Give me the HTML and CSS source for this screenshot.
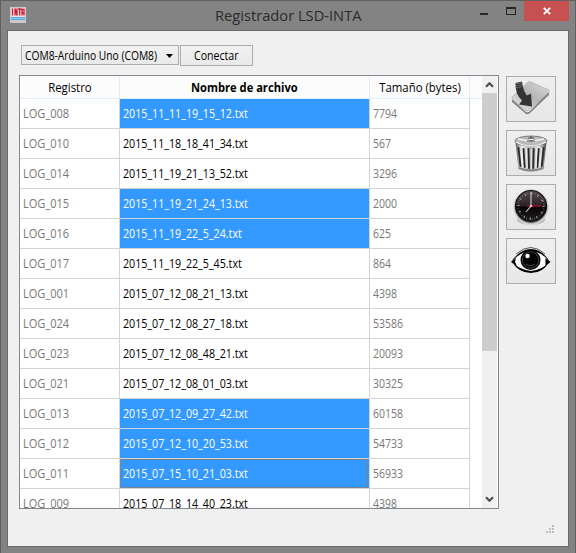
FILE: index.html
```html
<!DOCTYPE html>
<html lang="es">
<head>
<meta charset="utf-8">
<title>Registrador LSD-INTA</title>
<link rel="stylesheet" href="styles.css">
</head>
<body>
<div class="window">
  <header class="titlebar">
    <svg class="app-icon" width="16" height="16" viewBox="0 0 16 16"><rect width="16" height="16" fill="#c9c9c9"/><rect x="1" y="1" width="14" height="9" fill="#f3dfe2"/><path d="M2.500 1.500v7M5 8.500v-7l2 7v-7M8 2h3.500M9.700 2v6.500M12 8.500v-6h2v6M12 6h2" fill="none" stroke="#d21c32" stroke-width="1.300"/><path d="M1 10h14v3H1z" fill="#58a9e4"/><path d="M1 11.500h14" stroke="#a5d6f5" stroke-width=".7"/></svg>
    <h1><span>Registrador LSD-INTA</span></h1>
    <div class="controls">
      <svg width="48" height="20" viewBox="0 0 48 20"><path d="M4 12h8v2H4z" fill="#262626"/><path d="M30 6h10v2H30zM30 7h1v7h-1zM39 7h1v7h-1zM30 13h10v1H30z" fill="#262626"/></svg>
      <div class="close"><svg width="8" height="8" viewBox="0 0 8 8"><path d="M.8.8l6.400 6.400M7.200.8L.8 7.200" stroke="#fff" stroke-width="1.900"/></svg></div>
    </div>
  </header>
  <main class="client">
    <div class="toolbar">
      <div class="combo"><span class="t">COM8-Arduino Uno (COM8)</span><svg width="7" height="4" viewBox="0 0 7 4"><path d="M0 0h7L3.500 4z"/></svg></div>
      <div class="connect"><span class="t">Conectar</span></div>
    </div>
    <div class="content">
      <div class="table">
        <div class="grid">
          <div class="row head"><div><span class="t">Registro</span></div><div><b class="t">Nombre de archivo</b></div><div><span class="t">Tamaño (bytes)</span></div></div>
          <div class="row"><div><span>LOG_008</span></div><div class="sel"><span>2015_11_11_19_15_12.txt</span></div><div><span>7794</span></div></div>
          <div class="row"><div><span>LOG_010</span></div><div><span>2015_11_18_18_41_34.txt</span></div><div><span>567</span></div></div>
          <div class="row"><div><span>LOG_014</span></div><div><span>2015_11_19_21_13_52.txt</span></div><div><span>3296</span></div></div>
          <div class="row"><div><span>LOG_015</span></div><div class="sel"><span>2015_11_19_21_24_13.txt</span></div><div><span>2000</span></div></div>
          <div class="row"><div><span>LOG_016</span></div><div class="sel"><span>2015_11_19_22_5_24.txt</span></div><div><span>625</span></div></div>
          <div class="row"><div><span>LOG_017</span></div><div><span>2015_11_19_22_5_45.txt</span></div><div><span>864</span></div></div>
          <div class="row"><div><span>LOG_001</span></div><div><span>2015_07_12_08_21_13.txt</span></div><div><span>4398</span></div></div>
          <div class="row"><div><span>LOG_024</span></div><div><span>2015_07_12_08_27_18.txt</span></div><div><span>53586</span></div></div>
          <div class="row"><div><span>LOG_023</span></div><div><span>2015_07_12_08_48_21.txt</span></div><div><span>20093</span></div></div>
          <div class="row"><div><span>LOG_021</span></div><div><span>2015_07_12_08_01_03.txt</span></div><div><span>30325</span></div></div>
          <div class="row"><div><span>LOG_013</span></div><div class="sel"><span>2015_07_12_09_27_42.txt</span></div><div><span>60158</span></div></div>
          <div class="row"><div><span>LOG_012</span></div><div class="sel"><span>2015_07_12_10_20_53.txt</span></div><div><span>54733</span></div></div>
          <div class="row"><div><span>LOG_011</span></div><div class="sel focus"><span>2015_07_15_10_21_03.txt</span></div><div><span>56933</span></div></div>
          <div class="row"><div><span>LOG_009</span></div><div><span>2015_07_18_14_40_23.txt</span></div><div><span>4398</span></div></div>
        </div>
        <div class="scroll">
          <svg width="15" height="17" viewBox="0 0 15 17"><path d="M4 10.800L7.500 7.300l3.500 3.500" fill="none" stroke="#505050" stroke-width="2.200"/></svg>
          <div class="thumb"></div>
          <svg class="down" width="15" height="17" viewBox="0 0 15 17"><path d="M4 6.200l3.500 3.500L11 6.200" fill="none" stroke="#505050" stroke-width="2.200"/></svg>
        </div>
      </div>
      <aside class="actions">
        <div class="action"><svg width="48" height="44" viewBox="0 0 48 44">
          <defs><linearGradient id="plate" x1="0" y1="1" x2="1" y2="0"><stop offset="0" stop-color="#eee"/><stop offset=".5" stop-color="#b5b5b5"/><stop offset="1" stop-color="#ddd"/></linearGradient></defs>
          <path d="M5 22l14 13q2 1 4-1L42 14v4L23 36q-2 2-4 1L5 25z" fill="#858585"/><path d="M5 20L21 5q1-1 3 0l18 8q1 1 0 2L22 33q-2 2-4 0L5 22z" fill="url(#plate)" stroke="#aaa" stroke-width=".6"/>
          <path d="M8.500 6l6.500-1.500q1 9 5 14l4-2 1 13-13-2 3-4Q8 17 8.500 6z" fill="#333"/><path d="M8.500 7l6.500-1.500M8.500 9l6.500-1.500M9 11l6-1.500" stroke="#888" stroke-width=".6"/>
        </svg></div>
        <div class="action"><svg width="48" height="44" viewBox="0 0 48 44">
          <defs><linearGradient id="metal"><stop offset="0" stop-color="#555"/><stop offset=".2" stop-color="#eee"/><stop offset=".5" stop-color="#aaa"/><stop offset=".75" stop-color="#eee"/><stop offset="1" stop-color="#444"/></linearGradient></defs>
          <path d="M8.500 11h31l-3 27q-12.500 5-25 0z" fill="url(#metal)"/><g stroke="#2c2c2c" stroke-width="1.900" stroke-linecap="round"><path d="M11.500 17l2 18M16.500 18l1.200 18M21.500 18l.5 19M26.700 18l-.5 19M31.700 18l-1.200 18M36.700 17l-2 18"/></g><g stroke="#f4f4f4" stroke-width="1"><path d="M14.200 17l1.500 19M19.500 18l.5 19M24.200 18v20M29.500 18l-.5 19M34.400 17l-1.500 19"/></g>
          <ellipse cx="24" cy="10" rx="16" ry="5" fill="#bbb" stroke="#666" stroke-width=".8"/><path d="M9 11q15 8 30 0M11 8l11 2M37 8l-11 2" fill="none" stroke="#f2f2f2" stroke-width="1.300"/><path d="M20 10h8M24 5v5M21 7h6" stroke="#555" stroke-width="1.200"/><path d="M22 8.500h4" stroke="#eee"/><path d="M12 37q12 5 24 0" fill="none" stroke="#888" stroke-width="2"/>
        </svg></div>
        <div class="action"><svg width="48" height="44" viewBox="0 0 48 44">
          <defs><radialGradient id="rim"><stop offset=".86" stop-color="#777"/><stop offset=".94" stop-color="#d0d0d0"/><stop offset="1" stop-color="#e6e6e6"/></radialGradient><linearGradient id="dial" x1="0" y1="0" x2="0" y2="1"><stop offset="0" stop-color="#554b4d"/><stop offset=".48" stop-color="#2a2325"/><stop offset=".54" stop-color="#060404"/><stop offset="1" stop-color="#242021"/></linearGradient></defs>
          <ellipse cx="24" cy="34" rx="14" ry="6" fill="#aaa"/><circle cx="24" cy="22" r="18" fill="url(#rim)"/><circle cx="24" cy="21" r="15.700" fill="url(#dial)" stroke="#151112" stroke-width="1"/>
          <circle cx="24" cy="21" r="13" fill="none" stroke="#888" stroke-width="1.300" stroke-dasharray=".6 2.120"/><circle cx="24" cy="21" r="12.500" fill="none" stroke="#bbb" stroke-width="2.200" stroke-dasharray=".8 5.740"/>
          <path d="M24 7v14l-5 6" fill="none" stroke="#ccc" stroke-width="1.100"/><path d="M20 21h14" stroke="#b30f19" stroke-width="1.300"/><circle cx="24" cy="21" r="1.300" fill="#d9c8c8"/>
        </svg></div>
        <div class="action"><svg width="48" height="44" viewBox="0 0 48 44">
          <path d="M5 23Q12 10 24 10t19 13q-7 9-19 9T5 23z" fill="#fff"/><path d="M4 23Q13 10 24 10t19 13q-8-10-19-11Q13 13 4 23zM5 23q8 8 19 9 11-1 18-9-6 11-18 11T5 23z"/><path d="M9 15Q24 2 38 15" fill="none" stroke="#333" stroke-width=".8"/><path d="M4 23l5-4-1 4 2 4zM43.500 23l-5-4v8z"/>
          <circle cx="23.500" cy="21" r="10"/><circle cx="23.500" cy="21" r="8.200" fill="none" stroke="#888" stroke-width=".5"/><circle cx="20.500" cy="17" r="2.200" fill="#fff"/><path d="M19 25q5 3.500 9 0" fill="none" stroke="#888" stroke-width=".6"/>
        </svg></div>
      </aside>
    </div>
    <svg class="grip" width="8" height="8" viewBox="0 0 8 8"><path d="M6 0h2v2H6zM3 3h2v2H3zM6 3h2v2H6zM0 6h2v2H0zM3 6h2v2H3zM6 6h2v2H6z" fill="#bdbdbd"/></svg>
  </main>
</div>
</body>
</html>
```
FILE: styles.css
```css
* { box-sizing: border-box; }
body { margin: 0; font: 12px/16px "Open Sans", "Noto Sans", sans-serif; color: #000; }
svg { display: block; flex: none; }
.window { width: 576px; height: 553px; background: #838383; border: 1px solid #606060; border-bottom: 0; padding: 0 6px 6px; display: flex; flex-direction: column; overflow: hidden; }
.titlebar { height: 29px; flex: none; display: flex; align-items: flex-start; }
.app-icon { margin: 6px 0 0 3px; }
h1 { margin: 4px 0 0; flex: 1; padding-left: 189px; font-size: 15px; line-height: 20px; font-weight: 400; color: #2b2b2b; white-space: nowrap; }
h1 span { display: inline-block; transform: scaleX(.978); transform-origin: left; }
.controls { display: flex; }
.close { width: 45px; height: 20px; background: #c75050; display: flex; align-items: center; justify-content: center; }
.client { flex: 1; border: 1px solid #6b6b6b; background: #f0f0f0; padding: 14px 12px 0 11px; display: flex; flex-direction: column; min-height: 0; }
.toolbar { display: flex; gap: 1px; padding-left: 2px; height: 30px; align-items: flex-start; }
.combo, .connect { border: 1px solid #acacac; background: linear-gradient(#f2f2f2, #e9e9e9); display: flex; align-items: center; white-space: nowrap; }
.combo { width: 158px; height: 20px; padding: 1px 5px 0 3px; justify-content: space-between; }
.t { display: inline-block; transform: scaleX(.95); }
.combo .t { width: 134px; transform-origin: left; transform: scaleX(.855); }
.connect { width: 73px; height: 21px; justify-content: center; }
.connect .t { transform: scaleX(.88); }
.content { display: flex; gap: 7px; }
.table { width: 480px; height: 434px; border: 1px solid #828790; background: #fff; display: flex; overflow: hidden; }
.grid { width: 462px; flex: none; }
.row { display: grid; grid-template-columns: 100px 250px 100px; height: 30px; color: #787878; }
.row > div { border-right: 1px solid #d4d4d4; border-bottom: 1px solid #d4d4d4; padding: 7px 3px 0; white-space: nowrap; }
.row > div:nth-child(2) { color: #000; }
.row > .sel:nth-child(2) { color: #fff; background: #3399ff; background-clip: padding-box; }
.row span { display: inline-block; transform: scaleX(.92); transform-origin: left; }
.row > div:nth-child(2) span { transform: scaleX(.89); }
.row > div:nth-child(3) span { transform: scaleX(.875); }
.row > .focus { position: relative; }
.focus::after { content: ""; position: absolute; inset: 0 1px 0 1px; border: 1px dotted #b96c2b; }
.row.head { height: 23px; color: #000; background: #fcfcfc; border-bottom: 1px solid #e0ecfb; }
.row.head > div { border-bottom: 0; border-color: #e0ecfb; padding: 4px 0 0; text-align: center; }
.row.head > div:nth-child(n) span { transform: scaleX(.95); transform-origin: center; }
.row.head b { transform: scaleX(.93); }
.scroll { width: 15px; background: #f0f0f0; display: flex; flex-direction: column; }
.thumb { height: 258px; background: #cdcdcd; }
.down { margin-top: auto; }
.actions { display: flex; flex-direction: column; gap: 8px; padding-top: 1px; }
.action { width: 50px; height: 46px; border: 1px solid #acacac; background: linear-gradient(#efefef, #e7e7e7); }
.grip { margin: 16px 2px 0 auto; }
```
